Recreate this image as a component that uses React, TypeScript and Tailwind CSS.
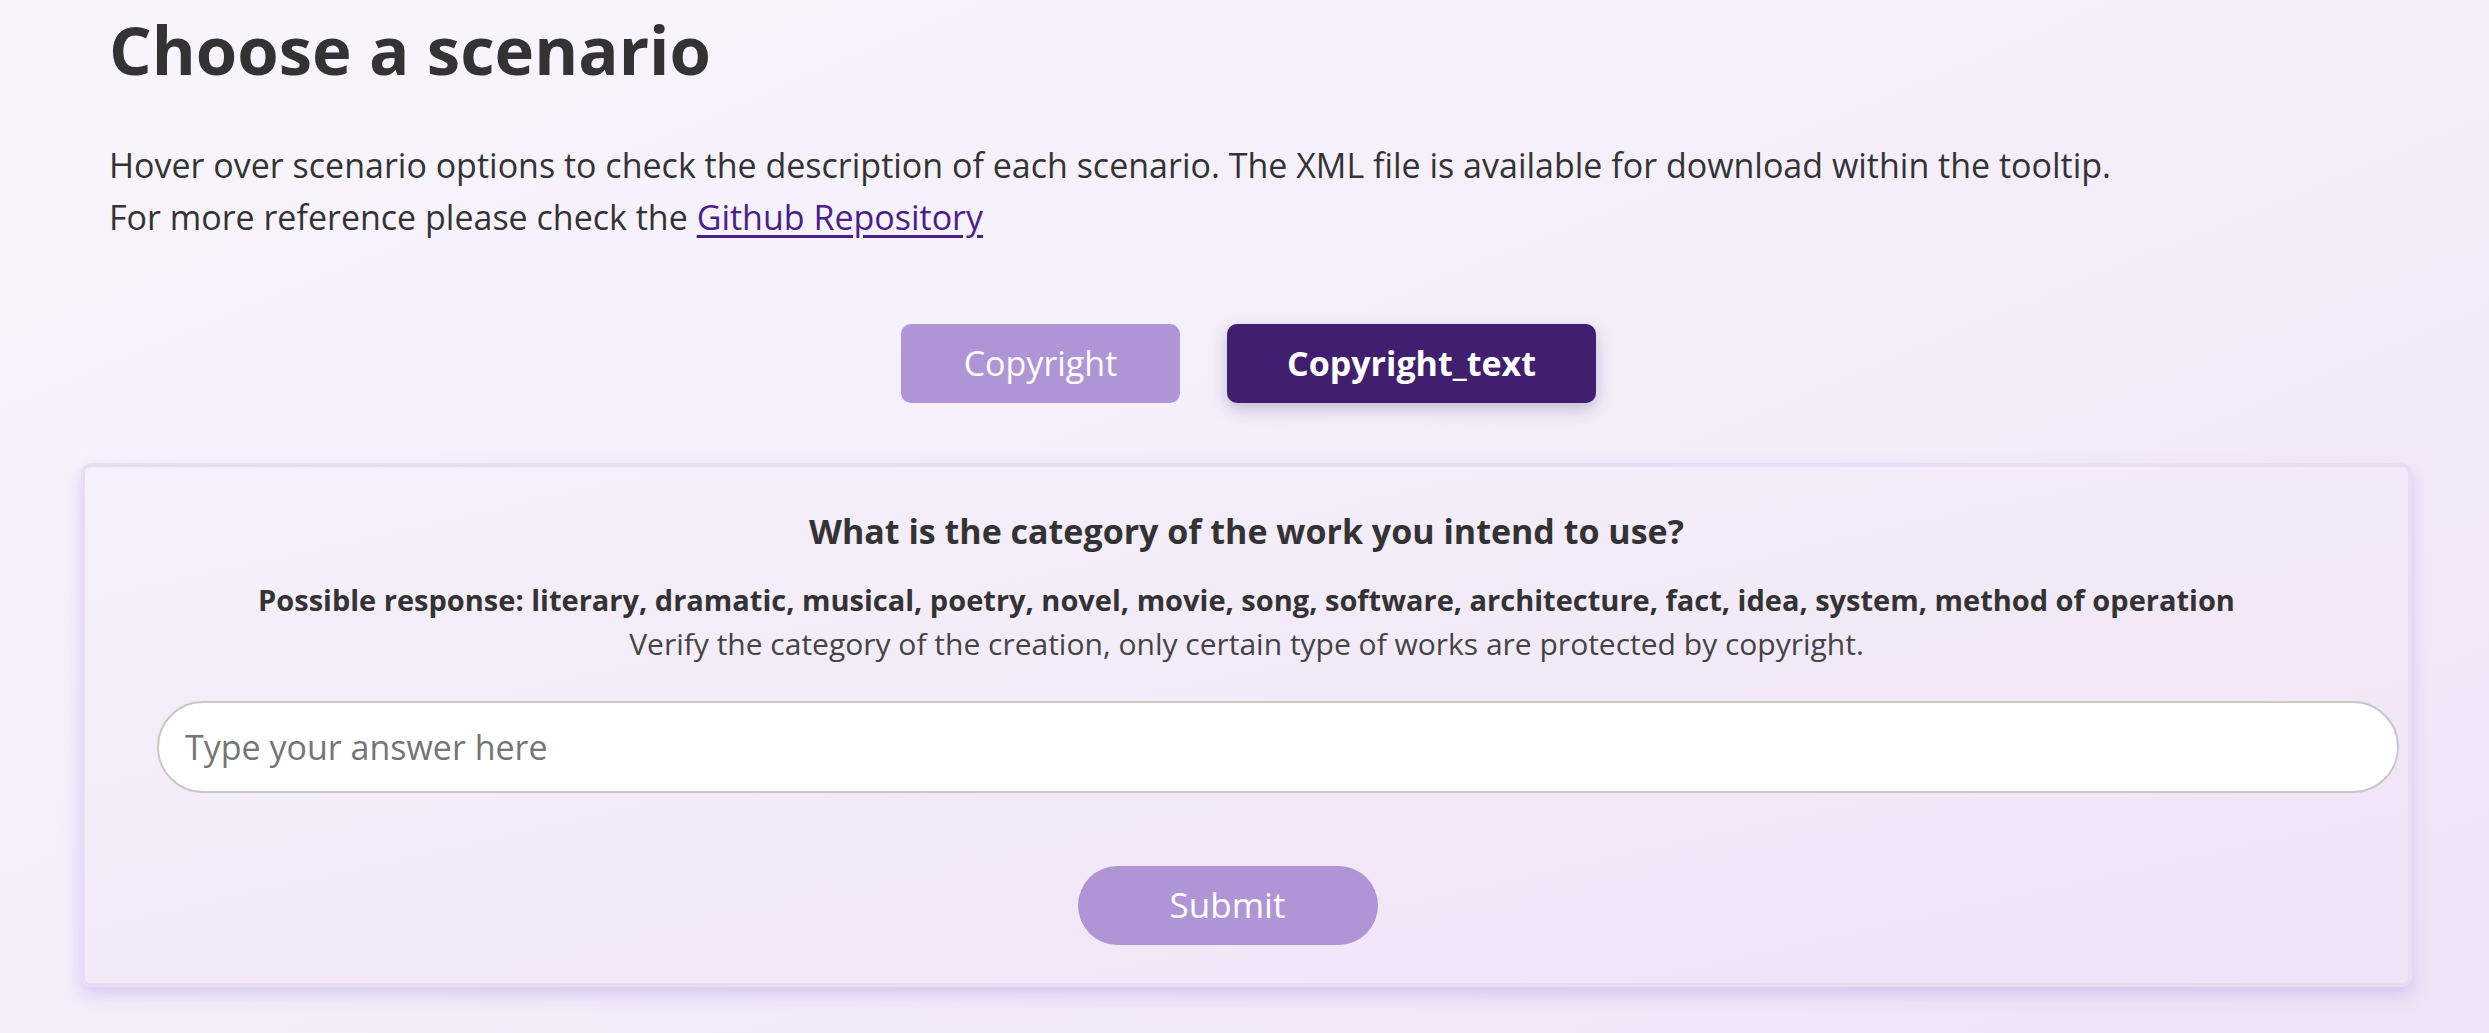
export default function App() {
  return (
    <div className="min-h-screen w-full bg-gradient-to-br from-[#f8f6fc] via-[#f4eefa] to-[#efe3f6] text-[#333] font-['Open_Sans',sans-serif]">
      <div className="pl-[81px] pr-[77px]">
        <div className="pl-[28px] pt-[16px]">
          <h1 className="text-[67px] leading-[67px] font-bold">Choose a scenario</h1>
          <p className="mt-[56px] text-[34px] leading-[52px]">
            Hover over scenario options to check the description of each scenario. The XML file is available for download within the tooltip.
            <br />
            For more reference please check the{" "}
            <a href="#" className="text-[#4b1e8c] underline underline-offset-[5px]">
              Github Repository
            </a>
          </p>
        </div>
        <div className="mt-[81px] flex justify-center gap-[47px] pl-[4px]">
          <button className="w-[279px] h-[79px] rounded-[10px] bg-[#b095d6] text-white text-[34px]">Copyright</button>
          <button className="w-[369px] h-[79px] rounded-[10px] bg-[#3f1f6e] text-white text-[34px] font-bold shadow-[0_6px_16px_rgba(60,30,100,0.25)]">
            Copyright_text
          </button>
        </div>
        <div className="mt-[60px] rounded-[10px] border-4 border-[#e9ddf4] bg-gradient-to-br from-[#f6f1fb] to-[#efe3f6] shadow-[0_8px_16px_rgba(190,170,235,0.5)] pt-[42px] pb-[38px]">
          <div className="text-center text-[34px] leading-[44px] font-bold">What is the category of the work you intend to use?</div>
          <div className="mt-[28px] text-center text-[29px] leading-[38px] font-bold">
            Possible response: literary, dramatic, musical, poetry, novel, movie, song, software, architecture, fact, idea, system, method of operation
          </div>
          <div className="mt-[6px] text-center text-[30px] leading-[38px] text-[#444]">
            Verify the category of the creation, only certain type of works are protected by copyright.
          </div>
          <input
            placeholder="Type your answer here"
            className="mt-[38px] ml-[72px] block w-[2242px] h-[92px] rounded-full border-2 border-[#c8c8c8] bg-white px-[26px] text-[34px] placeholder:text-[#757575] outline-none"
          />
          <div className="mt-[73px] flex justify-center pr-[38px]">
            <button className="w-[300px] h-[79px] rounded-full bg-[#b095d6] text-white text-[35px]">Submit</button>
          </div>
        </div>
      </div>
    </div>
  );
}
